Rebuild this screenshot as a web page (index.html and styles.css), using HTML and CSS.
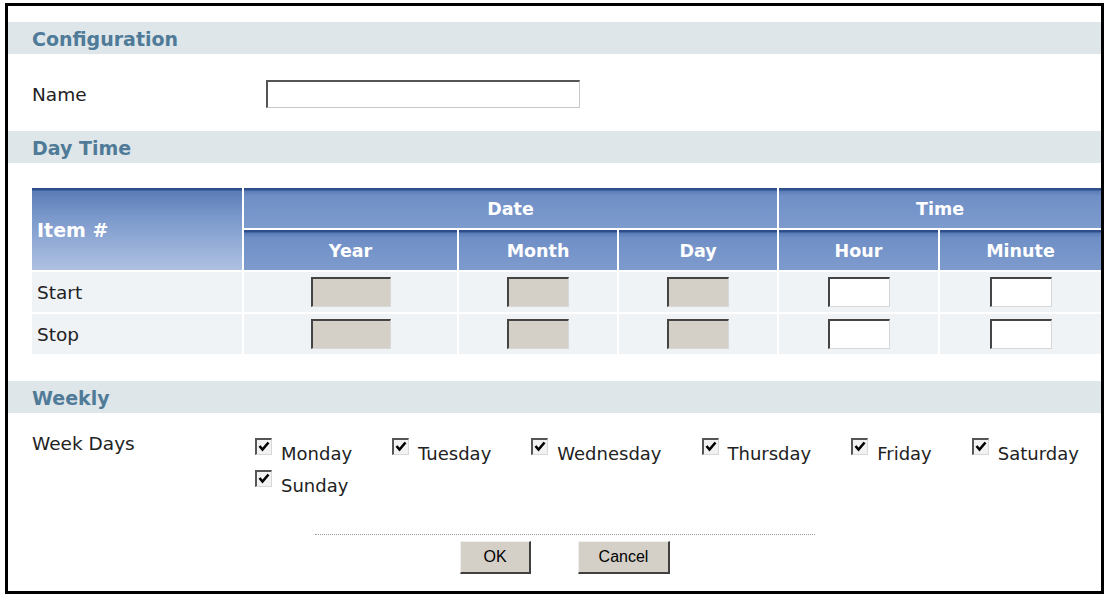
FILE: index.html
```html
<!DOCTYPE html>
<html>
<head>
<meta charset="utf-8">
<title>Schedule</title>
<link rel="stylesheet" href="styles.css">
</head>
<body>
<div class="frame">
  <div class="section-bar">Configuration</div>
  <div class="name-row">
    <span class="label">Name</span>
    <span class="textbox name-box"></span>
  </div>

  <div class="section-bar">Day Time</div>
  <div class="dt-grid">
    <div class="th th-item">Item #</div>
    <div class="th th-group th-date">Date</div>
    <div class="th th-group th-time">Time</div>
    <div class="th">Year</div>
    <div class="th">Month</div>
    <div class="th">Day</div>
    <div class="th">Hour</div>
    <div class="th">Minute</div>

    <div class="td td-label">Start</div>
    <div class="td"><span class="textbox disabled w80"></span></div>
    <div class="td"><span class="textbox disabled w62"></span></div>
    <div class="td"><span class="textbox disabled w62"></span></div>
    <div class="td"><span class="textbox w62"></span></div>
    <div class="td"><span class="textbox w62"></span></div>

    <div class="td td-label">Stop</div>
    <div class="td"><span class="textbox disabled w80"></span></div>
    <div class="td"><span class="textbox disabled w62"></span></div>
    <div class="td"><span class="textbox disabled w62"></span></div>
    <div class="td"><span class="textbox w62"></span></div>
    <div class="td"><span class="textbox w62"></span></div>
  </div>

  <div class="section-bar weekly">Weekly</div>
  <div class="week-row">
    <span class="label week-label">Week Days</span>
    <div class="days">
      <div class="day"><span class="cb"><svg viewBox="0 0 14 14" width="14" height="14"><path d="M2.5 6 L5.5 9.5 L11.5 2.5" fill="none" stroke="#000" stroke-width="2.6"/></svg></span><span class="day-text">Monday</span></div>
      <div class="day"><span class="cb"><svg viewBox="0 0 14 14" width="14" height="14"><path d="M2.5 6 L5.5 9.5 L11.5 2.5" fill="none" stroke="#000" stroke-width="2.6"/></svg></span><span class="day-text">Tuesday</span></div>
      <div class="day"><span class="cb"><svg viewBox="0 0 14 14" width="14" height="14"><path d="M2.5 6 L5.5 9.5 L11.5 2.5" fill="none" stroke="#000" stroke-width="2.6"/></svg></span><span class="day-text">Wednesday</span></div>
      <div class="day"><span class="cb"><svg viewBox="0 0 14 14" width="14" height="14"><path d="M2.5 6 L5.5 9.5 L11.5 2.5" fill="none" stroke="#000" stroke-width="2.6"/></svg></span><span class="day-text">Thursday</span></div>
      <div class="day"><span class="cb"><svg viewBox="0 0 14 14" width="14" height="14"><path d="M2.5 6 L5.5 9.5 L11.5 2.5" fill="none" stroke="#000" stroke-width="2.6"/></svg></span><span class="day-text">Friday</span></div>
      <div class="day"><span class="cb"><svg viewBox="0 0 14 14" width="14" height="14"><path d="M2.5 6 L5.5 9.5 L11.5 2.5" fill="none" stroke="#000" stroke-width="2.6"/></svg></span><span class="day-text">Saturday</span></div>
      <div class="day"><span class="cb"><svg viewBox="0 0 14 14" width="14" height="14"><path d="M2.5 6 L5.5 9.5 L11.5 2.5" fill="none" stroke="#000" stroke-width="2.6"/></svg></span><span class="day-text">Sunday</span></div>
    </div>
  </div>

  <div class="footer">
    <div class="buttons">
      <button class="btn btn-ok">OK</button>
      <button class="btn btn-cancel">Cancel</button>
    </div>
  </div>
</div>
</body>
</html>
```

FILE: styles.css
```css
* { box-sizing: border-box; }

body {
  margin: 0;
  background: #ffffff;
  font-family: "DejaVu Sans", Verdana, sans-serif;
  color: #222;
}

.frame {
  margin: 3px 0 0 5px;
  width: 1099px;
  height: 591px;
  border: 3px solid #000;
  background: #fff;
  padding-top: 16px;
}

.section-bar {
  height: 32px;
  line-height: 34px;
  background: #dfe6e9;
  color: #4f7b98;
  font-weight: bold;
  font-size: 19px;
  padding-left: 24px;
}

.label {
  font-size: 18.5px;
  line-height: 20px;
  color: #222;
}

.name-row {
  height: 77px;
  display: flex;
  align-items: center;
  padding: 2px 0 0 24px;
}

.name-row .label {
  width: 234px;
  padding-top: 2px;
}

.textbox {
  display: inline-block;
  height: 30px;
  background: #fff;
  border-top: 2px solid #444;
  border-left: 2px solid #444;
  border-right: 1px solid #d8d8d8;
  border-bottom: 1px solid #d8d8d8;
}

.name-box {
  width: 314px;
  height: 28px;
  border-top-color: #555;
  border-left-color: #555;
  border-right-color: #c8c8c8;
  border-bottom-color: #c8c8c8;
}

.textbox.disabled {
  background: #d4d0c8;
}

.w80 { width: 80px; }
.w62 { width: 62px; }

.dt-grid {
  margin: 25px 0 0 24px;
  display: grid;
  grid-template-columns: 210px 213px 158px 158px 159px 161px;
  grid-template-rows: 40px 40px 40px 40px;
  gap: 2px;
}

.th {
  color: #fff;
  font-weight: bold;
  font-size: 17.5px;
  display: flex;
  align-items: center;
  justify-content: center;
  padding-top: 2px;
  background: linear-gradient(to bottom, #2f4f8c 0, #2f4f8c 2px, #5a7cb6 3px, #6f8fc6 8px, #7e9bcd 100%);
}

.th-item {
  grid-row: span 2;
  justify-content: flex-start;
  padding-left: 5px;
  font-size: 19px;
  background: linear-gradient(to bottom, #2f4f8c 0, #2f4f8c 2px, #5a7cb6 3px, #7a98cb 35%, #aec1e2 100%);
}

.th-date { grid-column: span 3; }
.th-time { grid-column: span 2; }

.td {
  background: #f0f3f6;
  display: flex;
  align-items: center;
  justify-content: center;
}

.td-label {
  justify-content: flex-start;
  padding-left: 5px;
  font-size: 18.5px;
  color: #222;
}

.weekly {
  margin-top: 27px;
}

.week-row {
  display: flex;
  align-items: flex-start;
  padding: 21px 0 0 24px;
}

.week-label {
  width: 223px;
  flex: none;
  display: block;
}

.days {
  display: flex;
  flex-wrap: wrap;
  width: 880px;
  flex: none;
  column-gap: 40px;
}

.day {
  display: flex;
  align-items: flex-start;
  height: 32px;
}

.cb {
  display: inline-block;
  width: 17px;
  height: 17px;
  margin-top: 4px;
  background: #f2f2f2;
  border-top: 2px solid #555;
  border-left: 2px solid #555;
  border-right: 1px solid #d8d8d8;
  border-bottom: 1px solid #d8d8d8;
  position: relative;
}

.cb svg {
  position: absolute;
  left: 0;
  top: 0;
}

.day-text {
  font-size: 18px;
  line-height: 20px;
  padding-top: 10px;
  margin-left: 9px;
  color: #222;
}

.footer {
  margin: 36px 0 0 307px;
  width: 500px;
  border-top: 1px dotted #9a9a9a;
  padding-top: 6px;
}

.buttons {
  display: flex;
  justify-content: center;
  gap: 47px;
}

.btn {
  height: 33px;
  background: #d4d0c8;
  font-family: "Liberation Sans", Arial, sans-serif;
  font-size: 16px;
  color: #000;
  border-top: 1px solid #f0f0f0;
  border-left: 1px solid #f0f0f0;
  border-right: 2px solid #404040;
  border-bottom: 2px solid #404040;
  padding: 0;
}

.btn-ok { width: 71px; }
.btn-cancel { width: 92px; }
```
